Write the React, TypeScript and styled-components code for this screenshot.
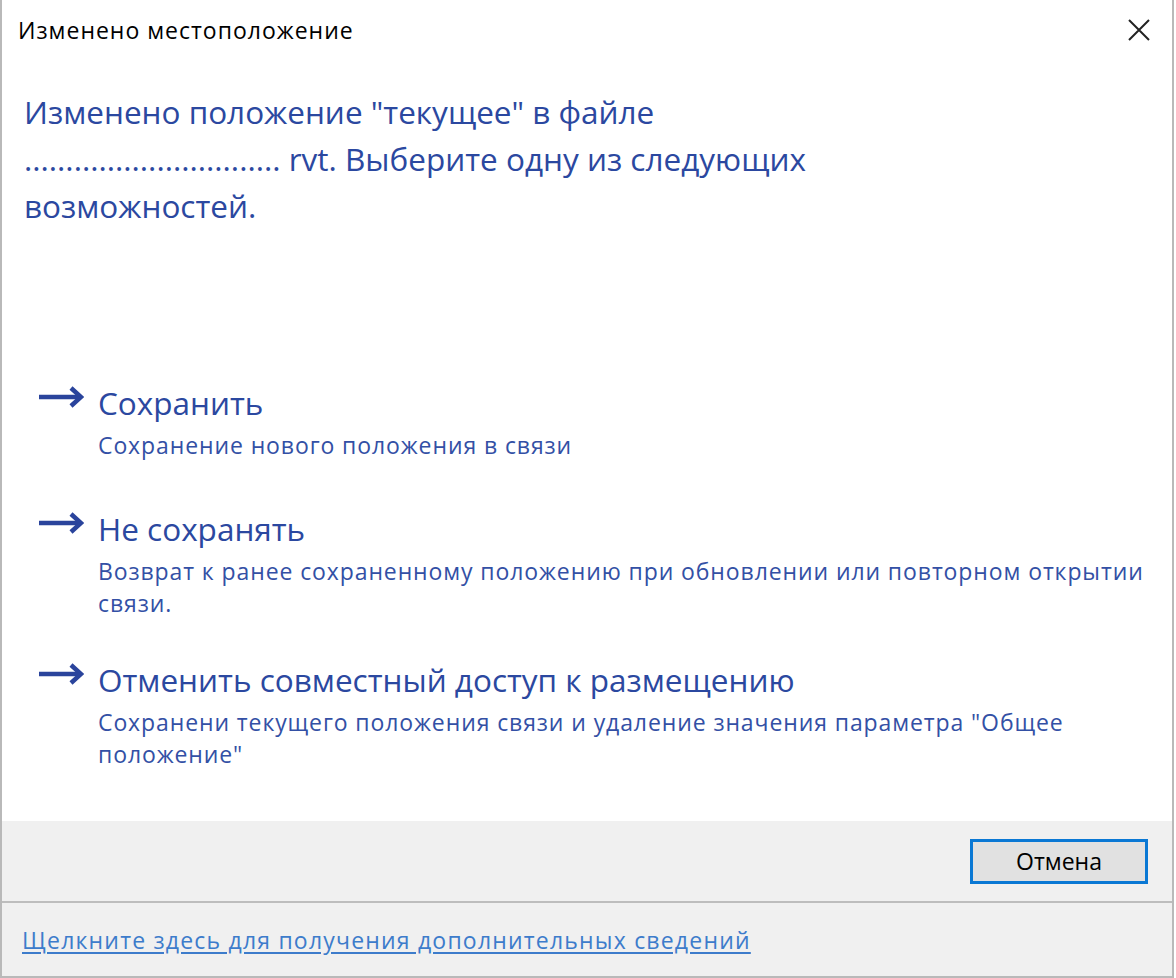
import React from "react";
import styled, { createGlobalStyle } from "styled-components";

const GlobalStyle = createGlobalStyle`
  html, body {
    margin: 0;
    padding: 0;
    background: #ffffff;
  }
  body {
    font-family: "Open Sans", "Noto Sans", "DejaVu Sans", sans-serif;
  }
`;

const Window = styled.div`
  width: 1170px;
  height: 976px;
  display: flex;
  flex-direction: column;
  background: #ffffff;
  border-left: 2px solid #b9b9b9;
  border-right: 2px solid #b9b9b9;
  border-bottom: 2px solid #b9b9b9;
`;

const TitleBar = styled.div`
  height: 60px;
  display: flex;
  align-items: center;
  justify-content: space-between;
  padding: 0 18px 0 16px;
`;

const TitleText = styled.div`
  font-size: 23px;
  letter-spacing: 1px;
  color: #000000;
`;

const CloseButton = styled.button`
  width: 30px;
  height: 30px;
  border: none;
  background: transparent;
  padding: 0;
  display: flex;
  align-items: center;
  justify-content: center;
`;

const Content = styled.div`
  flex: 1;
  display: flex;
  flex-direction: column;
  padding: 28px 22px 0 22px;
`;

const MainInstruction = styled.div`
  font-size: 31.5px;
  line-height: 47px;
  color: #2b48a0;
`;

const Links = styled.div`
  display: flex;
  flex-direction: column;
  gap: 41px;
  margin-top: 154px;
  padding-left: 14px;
`;

const CommandLink = styled.div<{ $minHeight: number }>`
  display: grid;
  grid-template-columns: 46px 1fr;
  grid-template-rows: 40px auto;
  align-content: start;
  column-gap: 14px;
  row-gap: 6px;
  min-height: ${(p) => p.$minHeight}px;
`;

const ArrowBox = styled.div`
  display: flex;
  align-items: flex-start;
  padding-top: 2px;
`;

const LinkTitle = styled.div`
  font-size: 31.5px;
  line-height: 40px;
  color: #2b48a0;
`;

const LinkNote = styled.div`
  grid-column: 2;
  font-size: 23px;
  letter-spacing: 0.9px;
  line-height: 32px;
  color: #3350a5;
`;

const ButtonBand = styled.div`
  height: 80px;
  background: #f0f0f0;
  display: flex;
  align-items: center;
  justify-content: flex-end;
  padding-right: 24px;
  border-bottom: 2px solid #bdbdbd;
`;

const CancelButton = styled.button`
  width: 178px;
  height: 45px;
  background: #e1e1e1;
  border: 3px solid #0a78d4;
  font-family: "Open Sans", "Noto Sans", sans-serif;
  font-size: 23px;
  color: #000000;
  padding: 0;
`;

const Footer = styled.div`
  height: 73px;
  background: #f0f0f0;
  display: flex;
  align-items: center;
  padding-left: 20px;
`;

const FooterLink = styled.a`
  font-size: 23px;
  letter-spacing: 1.2px;
  color: #3d7ccb;
  text-decoration: underline;
  text-underline-offset: 3px;
`;

const Arrow = () => (
  <svg width="46" height="24" viewBox="0 0 46 24">
    <path d="M1 12 H42" stroke="#2a449c" strokeWidth="4.5" fill="none" />
    <path d="M33 3 L43 12 L33 21" stroke="#2a449c" strokeWidth="4.5" fill="none" strokeLinejoin="miter" />
  </svg>
);

const CloseIcon = () => (
  <svg width="22" height="22" viewBox="0 0 22 22">
    <path d="M1 1 L21 21 M21 1 L1 21" stroke="#222" strokeWidth="2" />
  </svg>
);

const options = [
  {
    title: "Сохранить",
    note: ["Сохранение нового положения в связи"],
  },
  {
    title: "Не сохранять",
    note: [
      "Возврат к ранее сохраненному положению при обновлении или повторном открытии",
      "связи.",
    ],
  },
  {
    title: "Отменить совместный доступ к размещению",
    note: [
      "Сохранени текущего положения связи и удаление значения параметра \"Общее",
      "положение\"",
    ],
  },
];

export default function App() {
  return (
    <>
      <GlobalStyle />
      <Window>
        <TitleBar>
          <TitleText>Изменено местоположение</TitleText>
          <CloseButton>
            <CloseIcon />
          </CloseButton>
        </TitleBar>
        <Content>
          <MainInstruction>
            Изменено положение "текущее" в файле
            <br />
            ............................... rvt. Выберите одну из следующих
            <br />
            возможностей.
          </MainInstruction>
          <Links>
            {options.map((o) => (
              <CommandLink key={o.title} $minHeight={85}>
                <ArrowBox>
                  <Arrow />
                </ArrowBox>
                <LinkTitle>{o.title}</LinkTitle>
                <LinkNote>
                  {o.note.map((line, i) => (
                    <React.Fragment key={i}>
                      {i > 0 && <br />}
                      {line}
                    </React.Fragment>
                  ))}
                </LinkNote>
              </CommandLink>
            ))}
          </Links>
        </Content>
        <ButtonBand>
          <CancelButton>Отмена</CancelButton>
        </ButtonBand>
        <Footer>
          <FooterLink>Щелкните здесь для получения дополнительных сведений</FooterLink>
        </Footer>
      </Window>
    </>
  );
}
